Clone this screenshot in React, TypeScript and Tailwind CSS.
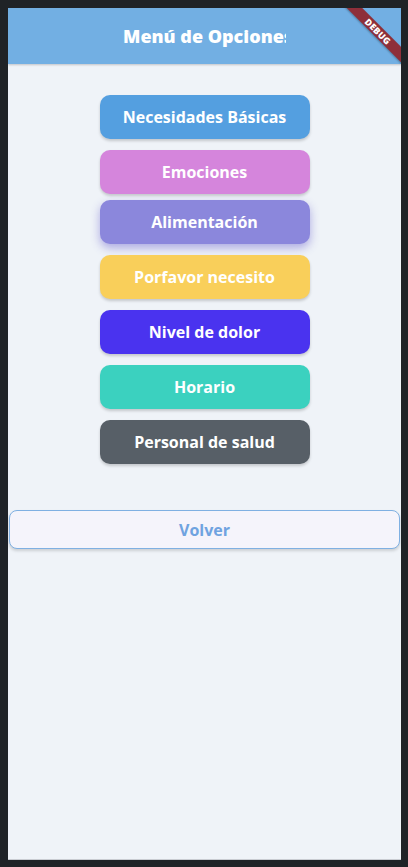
import React from "react";

const buttons = [
  { label: "Necesidades Básicas", cls: "bg-[#549fe0]" },
  { label: "Emociones", cls: "bg-[#d585dc]" },
  { label: "Alimentación", cls: "bg-[#8b87dc]", raised: true },
  { label: "Porfavor necesito", cls: "bg-[#f9cf5a]" },
  { label: "Nivel de dolor", cls: "bg-[#4a33ef]" },
  { label: "Horario", cls: "bg-[#3bd1bf]" },
  { label: "Personal de salud", cls: "bg-[#575f67]" },
];

export default function App() {
  return (
    <div className="w-[408px] h-[867px] bg-[#1f2327] p-[8px] pr-[7px] pb-[7px]" style={{ fontFamily: "'Open Sans', Lato, sans-serif" }}>
      <div className="relative w-full h-full bg-[#eff3f8] overflow-hidden flex flex-col border-b border-[#c9ccd2]">
        <div className="h-[56px] bg-[#72afe3] flex items-center justify-center shadow-[0_1px_2px_rgba(0,0,0,0.2)] shrink-0">
          <div className="w-[163px] overflow-hidden whitespace-nowrap text-white font-extrabold text-[18px]">
            Menú de Opciones
          </div>
        </div>
        <div className="flex flex-col items-center pt-[31px] gap-[11px]">
          {buttons.map((b) => (
            <div
              key={b.label}
              className={`w-[210px] h-[44px] rounded-[10px] flex items-center justify-center text-white font-bold text-[16px] ${b.cls} ${
                b.raised
                  ? "-mt-[5px] shadow-[0_4px_10px_rgba(90,80,200,0.45)]"
                  : "shadow-[0_2px_3px_rgba(0,0,0,0.18)]"
              }`}
            >
              {b.label}
            </div>
          ))}
        </div>
        <div className="mt-[46px] px-[1px]">
          <div className="h-[39px] rounded-[8px] border border-[#7fb0e2] bg-[#f5f4fb] flex items-center justify-center text-[#6fa3e0] font-bold text-[16px] shadow-[0_2px_3px_rgba(0,0,0,0.15)]">
            Volver
          </div>
        </div>
        <div className="absolute top-[18px] right-[-27px] w-[100px] h-[11px] bg-[#8e2f3a] rotate-45 flex items-center justify-center text-white font-extrabold text-[9px] tracking-[0.3px] leading-none shadow-[0_1px_2px_rgba(0,0,0,0.3)]">
          DEBUG
        </div>
      </div>
    </div>
  );
}
